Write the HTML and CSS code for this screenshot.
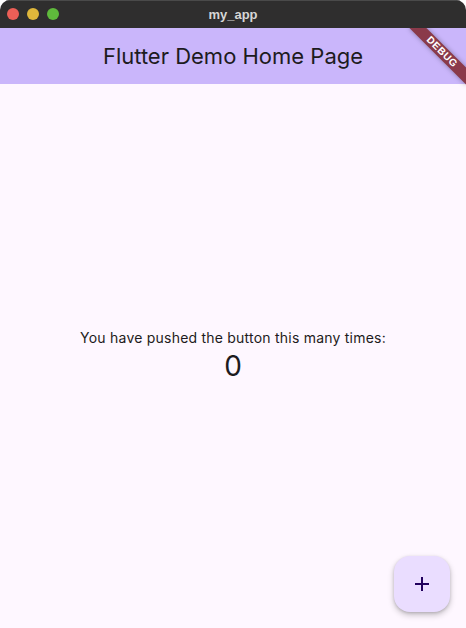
FILE: index.html
```html
<!DOCTYPE html>
<html>
<head>
<meta charset="utf-8">
<title>my_app</title>
<link rel="stylesheet" href="styles.css">
</head>
<body>
<div class="window">
  <div class="titlebar">
    <div class="lights">
      <span class="light red"></span>
      <span class="light yellow"></span>
      <span class="light green"></span>
    </div>
    <div class="wintitle">my_app</div>
  </div>
  <div class="app">
    <header class="appbar">
      <h1 class="apptitle">Flutter Demo Home Page</h1>
    </header>
    <main class="content">
      <p class="label">You have pushed the button this many times:</p>
      <p class="counter">0</p>
    </main>
    <button class="fab" aria-label="Increment">
      <svg width="24" height="24" viewBox="0 0 24 24"><path d="M19 13h-6v6h-2v-6H5v-2h6V5h2v6h6v2z" fill="#21005d"/></svg>
    </button>
    <div class="banner"><span>DEBUG</span></div>
  </div>
</div>
</body>
</html>
```

FILE: styles.css
```css
html, body {
  margin: 0;
  padding: 0;
  background: #ffffff;
}
.window {
  width: 466px;
  height: 628px;
  display: flex;
  flex-direction: column;
  border-radius: 10px 10px 0 0;
  overflow: hidden;
  background: #fef7ff;
}
.titlebar {
  height: 28px;
  flex: none;
  background: #2f2e2e;
  display: flex;
  align-items: center;
  justify-content: center;
  position: relative;
  box-shadow: inset 0 1px 0 #4a4a4a;
}
.lights {
  position: absolute;
  left: 7px;
  top: 8px;
  display: flex;
  gap: 8px;
}
.light {
  width: 12px;
  height: 12px;
  border-radius: 50%;
}
.red { background: #ec5f57; }
.yellow { background: #dfb73b; }
.green { background: #5fba3c; }
.wintitle {
  font-family: "Liberation Sans", Arial, sans-serif;
  font-weight: 700;
  font-size: 13px;
  color: #d6d6d6;
}
.app {
  flex: 1;
  display: flex;
  flex-direction: column;
  position: relative;
  overflow: hidden;
}
.appbar {
  height: 56px;
  flex: none;
  background: #cab6fb;
  display: flex;
  align-items: center;
  justify-content: center;
}
.apptitle {
  margin: 0;
  font-family: Inter, "Noto Sans", sans-serif;
  font-weight: 400;
  font-size: 22px;
  color: #1d1b20;
}
.content {
  flex: 1;
  display: flex;
  flex-direction: column;
  align-items: center;
  justify-content: center;
}
.label {
  margin: 0;
  font-family: Inter, "Noto Sans", sans-serif;
  font-size: 14px;
  line-height: 20px;
  letter-spacing: 0.22px;
  color: #1d1b20;
}
.counter {
  margin: 0;
  font-family: Inter, "Noto Sans", sans-serif;
  font-size: 28px;
  line-height: 36px;
  color: #1d1b20;
}
.fab {
  position: absolute;
  right: 16px;
  bottom: 16px;
  width: 56px;
  height: 56px;
  border: none;
  border-radius: 16px;
  background: #eaddff;
  display: flex;
  align-items: center;
  justify-content: center;
  padding: 0;
  box-shadow: 0 3px 6px rgba(0,0,0,0.22), 0 1px 3px rgba(0,0,0,0.15);
}
.banner {
  position: absolute;
  top: 28px;
  right: -40px;
  width: 80px;
  height: 12px;
  background: #8a3a4a;
  transform-origin: 40px -28px;
  transform: rotate(45deg);
  display: flex;
  align-items: center;
  justify-content: center;
  box-shadow: 0 0 5px rgba(0,0,0,0.35);
}
.banner span {
  font-family: "Liberation Sans", Arial, sans-serif;
  font-weight: 700;
  font-size: 10px;
  line-height: 12px;
  color: #ffffff;
  letter-spacing: 0.6px;
}
```
